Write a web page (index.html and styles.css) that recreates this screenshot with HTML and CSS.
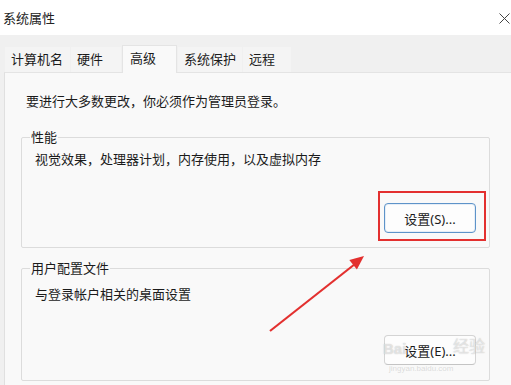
FILE: index.html
```html
<!DOCTYPE html>
<html>
<head>
  <title>系统属性</title>
  <link rel="stylesheet" href="styles.css">
</head>
<body>
  <header class="titlebar">
    <span class="title">系统属性</span>
    <svg class="close" width="11" height="11" viewBox="0 0 11 11">
      <path d="M0.5 0.5 L10.5 10.5 M10.5 0.5 L0.5 10.5" stroke="#444" stroke-width="1" fill="none"/>
    </svg>
  </header>

  <nav class="tabs">
    <div class="tab">计算机名</div>
    <div class="tab">硬件</div>
    <div class="tab tab-active">高级</div>
    <div class="tab">系统保护</div>
    <div class="tab">远程</div>
  </nav>

  <main class="panel">
    <p class="notice">要进行大多数更改，你必须作为管理员登录。</p>

    <fieldset class="group">
      <legend>性能</legend>
      <p class="desc">视觉效果，处理器计划，内存使用，以及虚拟内存</p>
      <div class="actions">
        <button class="button button-default" type="button">设置(S)...</button>
      </div>
    </fieldset>

    <fieldset class="group group2">
      <legend>用户配置文件</legend>
      <p class="desc">与登录帐户相关的桌面设置</p>
      <div class="actions">
        <button class="button" type="button">设置(E)...</button>
      </div>
    </fieldset>
  </main>

  <!-- watermark + annotation drawn over the dialog -->
  <div class="watermark">
    <span class="wm-bai">Bai</span><span class="wm-jy">经验</span>
    <span class="wm-url">jingyan.baidu.com</span>
  </div>
  <svg class="annot" width="511" height="385" viewBox="0 0 511 385">
    <rect x="379" y="192" width="106" height="48" fill="none" stroke="#e3302f" stroke-width="2"/>
    <line x1="270" y1="331" x2="355" y2="264" stroke="#e3302f" stroke-width="2.2"/>
    <polygon points="364,256 356.9,269.4 349.3,260.1" fill="#e3302f"/>
  </svg>
</body>
</html>
```

FILE: styles.css
```css
body {
  margin: 0;
  width: 511px;
  height: 385px;
  overflow: hidden;
  background-color: #f0f0f0;
  font-family: "Noto Sans", "Noto Sans CJK SC", sans-serif;
  font-size: 13px;
  color: #1b1b1b;
  position: relative;
}

.titlebar {
  height: 35px;
  background-color: #ffffff;
  display: flex;
  align-items: center;
  justify-content: space-between;
  padding-left: 3px;
}
.title {
  line-height: 16px;
  color: #222;
  margin-top: 1px;
}
.close {
  margin-top: 2px;
  margin-right: 1px;
}

/* tab strip */
.tabs {
  height: 37px;
  box-sizing: border-box;
  padding: 9px 0 0 5px;
  display: grid;
  grid-template-columns: 65px 50px 55px 64px 48px;
  column-gap: 1px;
  align-items: end;
}
.tab {
  height: 25px;
  line-height: 25px;
  padding-left: 6px;
  background-color: #f4f4f4;
  white-space: nowrap;
}
.tab-active {
  height: 28px;
  line-height: 25px;
  padding-left: 7px;
  background-color: #f9f9f9;
  border: 1px solid #e4e4e4;
  border-bottom: none;
  box-sizing: border-box;
  position: relative;
  top: 1px;
}

/* page */
.panel {
  display: block;
  box-sizing: border-box;
  margin-left: 4px;
  border-left: 1px solid #e0e0e0;
  border-top: 1px solid #e4e4e4;
  background-color: #f9f9f9;
  height: 313px;
  padding: 19px 21px 0 16px;
  overflow: hidden;
}
.notice {
  margin: 0 0 0 5px;
  line-height: 18px;
}

.group {
  margin: 19px 0 0 0;
  padding: 0 13px 14px 8px;
  border: 1px solid #dcdcdc;
  border-radius: 2px;
}
.group legend {
  padding: 0 1px;
  line-height: 16px;
}
.group2 {
  margin-top: 12px;
  padding-bottom: 15px;
}
.desc {
  margin: 6px 0 0 5px;
  line-height: 17px;
}
.group2 .desc {
  margin-top: 10px;
}
.actions {
  display: flex;
  justify-content: flex-end;
  margin-top: 35px;
}
.group2 .actions {
  margin-top: 32px;
}

.button {
  width: 92px;
  height: 30px;
  font-family: "Noto Sans", "Noto Sans CJK SC", sans-serif;
  font-size: 13px;
  color: #1b1b1b;
  background-color: #fdfdfd;
  border: 1px solid #d4d4d4;
  border-bottom-color: #c4c4c4;
  border-radius: 4px;
  padding: 0;
}
.button-default {
  border: 1px solid #5d93c9;
  box-shadow: inset 0 0 0 1px #e6eef7;
}

/* watermark over the second button */
.watermark {
  position: absolute;
  left: 383px;
  top: 331px;
  width: 110px;
  height: 44px;
  white-space: nowrap;
  pointer-events: none;
}
.wm-bai {
  position: absolute;
  left: 0;
  top: 9px;
  font-family: "Liberation Sans", sans-serif;
  font-size: 15px;
  font-weight: bold;
  color: rgba(255, 255, 255, 0.55);
  text-shadow: 0 0 1px rgba(120, 120, 120, 0.5);
}
.wm-jy {
  position: absolute;
  left: 70px;
  top: 5px;
  font-size: 16px;
  line-height: 20px;
  color: rgba(255, 255, 255, 0.55);
  text-shadow: 0 0 1px rgba(120, 120, 120, 0.5);
}
.wm-url {
  position: absolute;
  left: 6px;
  top: 33px;
  font-family: "Liberation Sans", sans-serif;
  font-size: 8px;
  color: rgba(190, 190, 190, 0.5);
}

.annot {
  position: absolute;
  left: 0;
  top: 0;
  pointer-events: none;
}
```
